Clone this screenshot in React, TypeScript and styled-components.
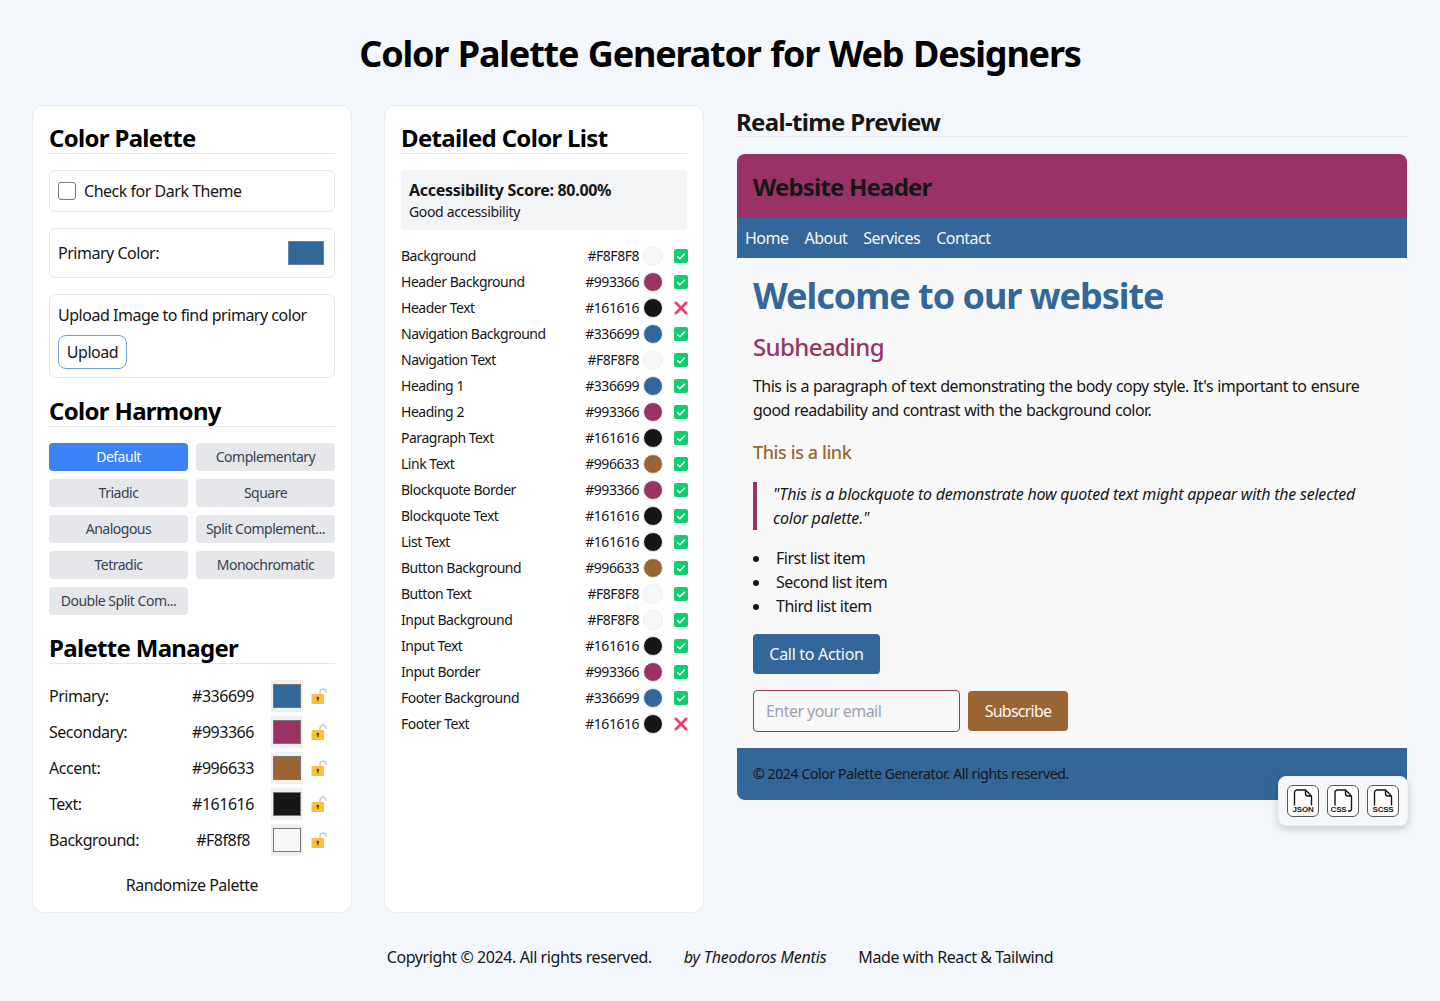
import { createGlobalStyle, styled } from "styled-components";

const GlobalStyle = createGlobalStyle`
  * { box-sizing: border-box; }
  body {
    margin: 0;
    background: #f3f6fa;
    color: #161616;
    font-family: "Noto Sans", "Open Sans", sans-serif;
  }
`;

const harmonies = [
  "Default",
  "Complementary",
  "Triadic",
  "Square",
  "Analogous",
  "Split Complement...",
  "Tetradic",
  "Monochromatic",
  "Double Split Com...",
];

const palette = [
  { label: "Primary:", hex: "#336699", color: "#336699" },
  { label: "Secondary:", hex: "#993366", color: "#993366" },
  { label: "Accent:", hex: "#996633", color: "#996633" },
  { label: "Text:", hex: "#161616", color: "#161616" },
  { label: "Background:", hex: "#F8f8f8", color: "#f8f8f8" },
];

const details = [
  ["Background", "#F8F8F8", true],
  ["Header Background", "#993366", true],
  ["Header Text", "#161616", false],
  ["Navigation Background", "#336699", true],
  ["Navigation Text", "#F8F8F8", true],
  ["Heading 1", "#336699", true],
  ["Heading 2", "#993366", true],
  ["Paragraph Text", "#161616", true],
  ["Link Text", "#996633", true],
  ["Blockquote Border", "#993366", true],
  ["Blockquote Text", "#161616", true],
  ["List Text", "#161616", true],
  ["Button Background", "#996633", true],
  ["Button Text", "#F8F8F8", true],
  ["Input Background", "#F8F8F8", true],
  ["Input Text", "#161616", true],
  ["Input Border", "#993366", true],
  ["Footer Background", "#336699", true],
  ["Footer Text", "#161616", false],
] as [string, string, boolean][];

const LockIcon = () => (
  <svg width="16" height="16" viewBox="0 0 16 16">
    <path d="M9 6V4a3 3 0 0 1 6 0v1" fill="none" stroke="#c4c8cc" strokeWidth="1.3" />
    <rect x="0.5" y="6" width="12.5" height="10" rx="1" fill="#fbbf3c" />
    <circle cx="6.8" cy="10" r="1.3" fill="#5b4210" />
    <rect x="6.2" y="10" width="1.2" height="3" fill="#5b4210" />
  </svg>
);

const CheckIcon = () => (
  <svg width="14" height="14" viewBox="0 0 14 14">
    <rect width="14" height="14" rx="2" fill="#0fce6e" />
    <path d="M3.2 7.2l2.6 2.5 5-5" fill="none" stroke="#fff" strokeWidth="1.5" />
  </svg>
);

const CrossIcon = () => (
  <svg width="14" height="14" viewBox="0 0 14 14">
    <path d="M1 1l12 12M13 1L1 13" fill="none" stroke="#f43f6e" strokeWidth="2.8" />
  </svg>
);

const FileIcon = ({ label, hook }: { label: string; hook?: boolean }) => (
  <svg width="24" height="24" viewBox="0 0 24 24">
    <path
      d={
        hook
          ? "M4 16.5V3.5a2.5 2.5 0 0 1 2.5-2.5h8l6 6v13a2 2 0 0 1-2 2h-1.5M14.5 1v3.5a2.5 2.5 0 0 0 2.5 2.5h3.5"
          : "M3.5 16.5V3.5a2.5 2.5 0 0 1 2.5-2.5h8.5l6 6v9.5M14.5 1v3.5a2.5 2.5 0 0 0 2.5 2.5h3.5"
      }
      fill="none"
      stroke="#161616"
      strokeWidth="1.4"
    />
    <FileLabel x={hook ? 7.5 : 12} y="22.7" textAnchor="middle">
      {label}
    </FileLabel>
  </svg>
);

export default function App() {
  return (
    <Page>
      <GlobalStyle />
      <Title>Color Palette Generator for Web Designers</Title>
      <Columns>
        <Card>
          <SectionTitle>Color Palette</SectionTitle>
          <OptionBox>
            <CheckRow>
              <FakeCheck />
              Check for Dark Theme
            </CheckRow>
          </OptionBox>
          <OptionBox>
            <SpacedRow>
              Primary Color:
              <PrimaryWell />
            </SpacedRow>
          </OptionBox>
          <UploadBox>
            <div>Upload Image to find primary color</div>
            <UploadButton>Upload</UploadButton>
          </UploadBox>

          <SectionTitle>Color Harmony</SectionTitle>
          <HarmonyGrid>
            {harmonies.map((h) => (
              <HarmonyButton key={h} $active={h === "Default"}>
                {h}
              </HarmonyButton>
            ))}
          </HarmonyGrid>

          <SectionTitle>Palette Manager</SectionTitle>
          <PaletteList>
            {palette.map((p) => (
              <PaletteRow key={p.label}>
                <PaletteLabel>{p.label}</PaletteLabel>
                <PaletteHex>{p.hex}</PaletteHex>
                <SwatchFrame>
                  <Swatch $color={p.color} />
                </SwatchFrame>
                <LockSlot>
                  <LockIcon />
                </LockSlot>
              </PaletteRow>
            ))}
          </PaletteList>
          <Randomize>Randomize Palette</Randomize>
        </Card>

        <Card>
          <SectionTitle>Detailed Color List</SectionTitle>
          <ScoreBox>
            <ScoreTitle>Accessibility Score: 80.00%</ScoreTitle>
            <ScoreNote>Good accessibility</ScoreNote>
          </ScoreBox>
          <DetailList>
            {details.map(([name, hex, ok]) => (
              <DetailRow key={name}>
                <DetailName>{name}</DetailName>
                <DetailHex>{hex}</DetailHex>
                <Dot $color={hex} />
                <StatusSlot>{ok ? <CheckIcon /> : <CrossIcon />}</StatusSlot>
              </DetailRow>
            ))}
          </DetailList>
        </Card>

        <PreviewColumn>
          <PreviewHeading>Real-time Preview</PreviewHeading>
          <Preview>
            <SiteHeader>Website Header</SiteHeader>
            <SiteNav>
              <span>Home</span>
              <span>About</span>
              <span>Services</span>
              <span>Contact</span>
            </SiteNav>
            <SiteMain>
              <H1>Welcome to our website</H1>
              <H2>Subheading</H2>
              <Para>
                This is a paragraph of text demonstrating the body copy style. It's important to
                ensure good readability and contrast with the background color.
              </Para>
              <SiteLink>This is a link</SiteLink>
              <Quote>
                "This is a blockquote to demonstrate how quoted text might appear with the selected
                color palette."
              </Quote>
              <SiteList>
                <li>First list item</li>
                <li>Second list item</li>
                <li>Third list item</li>
              </SiteList>
              <Cta>Call to Action</Cta>
              <SubscribeRow>
                <EmailInput placeholder="Enter your email" />
                <SubscribeButton>Subscribe</SubscribeButton>
              </SubscribeRow>
            </SiteMain>
            <SiteFooter>© 2024 Color Palette Generator. All rights reserved.</SiteFooter>
          </Preview>
          <ExportDock>
            <ExportButton>
              <FileIcon label="JSON" />
            </ExportButton>
            <ExportButton>
              <FileIcon label="CSS" hook />
            </ExportButton>
            <ExportButton>
              <FileIcon label="SCSS" />
            </ExportButton>
          </ExportDock>
        </PreviewColumn>
      </Columns>
      <Footer>
        <span>Copyright © 2024. All rights reserved.</span>
        <em>by Theodoros Mentis</em>
        <span>Made with React &amp; Tailwind</span>
      </Footer>
    </Page>
  );
}

const Page = styled.div`
  min-height: 1001px;
  padding: 32px;
  letter-spacing: -0.48px;
`;

const Title = styled.h1`
  margin: 0 0 29px;
  font-size: 36px;
  line-height: 44px;
  font-weight: 700;
  text-align: center;
  color: #000;
  letter-spacing: -1.2px;
  word-spacing: 1.4px;
`;

const Columns = styled.div`
  display: grid;
  grid-template-columns: 320px 320px 672px;
  gap: 32px;
  align-items: start;
`;

const Card = styled.section`
  height: 808px;
  padding: 16px;
  background: #fff;
  border: 1px solid #e8ebf0;
  border-radius: 12px;
`;

const SectionTitle = styled.h2`
  margin: 0 0 16px;
  height: 32px;
  font-size: 24px;
  line-height: 32px;
  font-weight: 700;
  color: #000;
  border-bottom: 1px solid #e5e7eb;
  letter-spacing: -0.68px;
`;

const OptionBox = styled.div`
  padding: 8px;
  margin-bottom: 16px;
  border: 1px solid #e5e7eb;
  border-radius: 6px;
  font-size: 16px;
  line-height: 24px;
`;

const UploadBox = styled(OptionBox)`
  margin-bottom: 17px;
`;

const CheckRow = styled.label`
  display: flex;
  align-items: center;
  gap: 8px;
`;

const FakeCheck = styled.span`
  width: 18px;
  height: 18px;
  border: 1px solid #767676;
  border-radius: 3px;
`;

const SpacedRow = styled.div`
  display: flex;
  align-items: center;
  justify-content: space-between;
  padding-right: 2px;
  line-height: 26px;
`;

const PrimaryWell = styled.span`
  width: 36px;
  height: 24px;
  margin: 4px 0;
  background: #336699;
  border: 1px solid #6b7f99;
`;

const UploadButton = styled.button`
  display: block;
  width: 69px;
  height: 34px;
  margin-top: 8px;
  padding: 0;
  background: #fff;
  color: #161616;
  font: inherit;
  letter-spacing: inherit;
  border: 1px solid #6f9fd8;
  border-radius: 8px;
`;

const HarmonyGrid = styled.div`
  display: grid;
  grid-template-columns: 1fr 1fr;
  gap: 8px;
  margin-bottom: 17px;
`;

const HarmonyButton = styled.button<{ $active?: boolean }>`
  height: 28px;
  padding: 0 0 2px;
  border: none;
  border-radius: 4px;
  font-family: inherit;
  font-size: 14px;
  letter-spacing: -0.5px;
  background: ${({ $active }) => ($active ? "#3b82f6" : "#e5e7eb")};
  color: ${({ $active }) => ($active ? "#fff" : "#374151")};
`;

const PaletteList = styled.div`
  display: flex;
  flex-direction: column;
  gap: 4px;
`;

const PaletteRow = styled.div`
  display: grid;
  grid-template-columns: 126px 96px 32px 32px;
  align-items: center;
  height: 32px;
  font-size: 16px;
`;

const PaletteLabel = styled.span``;

const PaletteHex = styled.span`
  text-align: center;
`;

const SwatchFrame = styled.span`
  display: flex;
  width: 32px;
  height: 32px;
  padding: 4px 2px;
  background: #f0f0f0;
`;

const Swatch = styled.span<{ $color: string }>`
  flex: 1;
  background: ${({ $color }) => $color};
  border: 1px solid #767676;
`;

const LockSlot = styled.span`
  display: flex;
  padding-left: 8px;
`;

const Randomize = styled.div`
  margin-top: 17px;
  height: 24px;
  font-size: 16px;
  line-height: 24px;
  text-align: center;
`;

const ScoreBox = styled.div`
  height: 60px;
  padding: 8px;
  margin-bottom: 13px;
  background: #f3f4f6;
  border-radius: 4px;
`;

const ScoreTitle = styled.div`
  font-size: 16px;
  line-height: 24px;
  font-weight: 700;
  letter-spacing: -0.3px;
`;

const ScoreNote = styled.div`
  font-size: 14px;
  line-height: 20px;
  letter-spacing: -0.35px;
`;

const DetailList = styled.div`
  display: flex;
  flex-direction: column;
`;

const DetailRow = styled.div`
  display: flex;
  align-items: center;
  height: 26px;
  margin-right: -1px;
  font-size: 14px;
`;

const DetailName = styled.span`
  flex: 1;
  padding-bottom: 2px;
`;

const DetailHex = styled.span`
  padding-bottom: 2px;
`;

const Dot = styled.span<{ $color: string }>`
  width: 20px;
  height: 20px;
  margin-left: 4px;
  border-radius: 50%;
  background: ${({ $color }) => $color};
  border: 1px solid #eceef1;
`;

const StatusSlot = styled.span`
  display: flex;
  margin-left: 11px;
`;

const PreviewColumn = styled.section`
  position: relative;
`;

const PreviewHeading = styled.h2`
  margin: 0 0 17px;
  height: 32px;
  font-size: 24px;
  line-height: 34px;
  font-weight: 700;
  color: #161616;
  border-bottom: 1px solid #e5e7eb;
  letter-spacing: -0.65px;
`;

const Preview = styled.div`
  margin-left: 1px;
  margin-right: 1px;
  overflow: hidden;
  border-radius: 8px;
  background: #f8f8f8;
`;

const SiteHeader = styled.header`
  height: 64px;
  padding: 0 16px;
  background: #993366;
  font-size: 24px;
  line-height: 66px;
  font-weight: 700;
  letter-spacing: -0.8px;
`;

const SiteNav = styled.nav`
  display: flex;
  align-items: center;
  gap: 16px;
  height: 40px;
  padding: 0 8px;
  background: #336699;
  color: #f8f8f8;
  font-size: 16px;
  letter-spacing: -0.52px;
`;

const SiteMain = styled.main`
  padding: 16px;
`;

const H1 = styled.h1`
  margin: 0 0 12px;
  font-size: 36px;
  line-height: 44px;
  font-weight: 700;
  color: #336699;
  letter-spacing: -1.03px;
`;

const H2 = styled.h2`
  margin: 0 0 10px;
  font-size: 24px;
  line-height: 34px;
  font-weight: 500;
  color: #993366;
  letter-spacing: -0.6px;
`;

const Para = styled.p`
  margin: 0 0 16px;
  font-size: 16px;
  line-height: 24px;
  letter-spacing: -0.55px;
  word-spacing: 0.6px;
`;

const SiteLink = styled.div`
  margin-bottom: 16px;
  font-size: 18px;
  line-height: 28px;
  font-weight: 500;
  color: #996633;
  letter-spacing: -0.4px;
`;

const Quote = styled.blockquote`
  margin: 0 0 16px;
  padding: 0 16px;
  border-left: 4px solid #993366;
  font-size: 16px;
  line-height: 24px;
  font-style: italic;
  letter-spacing: -0.22px;
`;

const SiteList = styled.ul`
  margin: 0 0 16px;
  padding-left: 18px;
  font-size: 16px;
  line-height: 24px;
  li {
    padding-left: 5px;
  }
`;

const Cta = styled.button`
  display: block;
  width: 127px;
  height: 40px;
  margin-bottom: 16px;
  padding: 0;
  border: none;
  border-radius: 4px;
  background: #336699;
  color: #f8f8f8;
  font: inherit;
  font-size: 16px;
  letter-spacing: -0.3px;
`;

const SubscribeRow = styled.div`
  display: flex;
  align-items: center;
  gap: 8px;
`;

const EmailInput = styled.input`
  width: 207px;
  height: 42px;
  padding: 0 12px;
  background: #f8f8f8;
  border: 1px solid #993366;
  border-radius: 4px;
  font: inherit;
  font-size: 16px;
  letter-spacing: -0.55px;
  &::placeholder {
    color: #9ca3af;
  }
`;

const SubscribeButton = styled.button`
  width: 100px;
  height: 40px;
  padding: 0;
  border: none;
  border-radius: 4px;
  background: #996633;
  color: #f8f8f8;
  font: inherit;
  font-size: 16px;
  letter-spacing: -0.75px;
`;

const SiteFooter = styled.footer`
  height: 52px;
  padding: 0 16px;
  background: #336699;
  font-size: 14px;
  line-height: 52px;
  letter-spacing: -0.36px;
`;

const ExportDock = styled.div`
  position: absolute;
  right: 0;
  top: 671px;
  display: flex;
  gap: 8px;
  padding: 8px;
  background: #f6f7f9;
  border: 1px solid #eef0f3;
  border-radius: 8px;
  box-shadow: 0 3px 8px rgba(0, 0, 0, 0.18);
`;

const ExportButton = styled.button`
  display: flex;
  align-items: center;
  justify-content: center;
  width: 32px;
  height: 32px;
  padding: 0;
  background: #fff;
  border: 1px solid #555;
  border-radius: 6px;
`;

const FileLabel = styled.text`
  font-family: "Liberation Sans", sans-serif;
  font-size: 8px;
  font-weight: 700;
  fill: #161616;
  letter-spacing: -0.2px;
`;

const Footer = styled.footer`
  display: flex;
  justify-content: center;
  gap: 32px;
  margin-top: 32px;
  font-size: 16px;
  line-height: 24px;
  letter-spacing: -0.42px;
  em {
    letter-spacing: -0.2px;
  }
`;
